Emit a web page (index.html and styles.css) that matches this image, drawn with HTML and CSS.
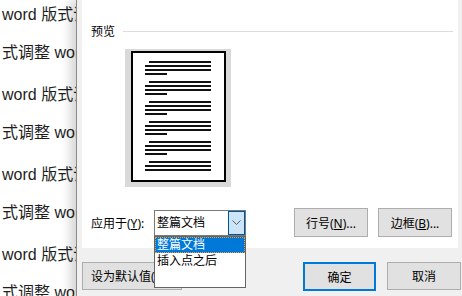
FILE: index.html
```html
<!DOCTYPE html>
<html lang="zh-CN">
<head>
  <meta charset="UTF-8">
  <title>页面设置</title>
  <link rel="stylesheet" href="styles.css">
</head>
<body>
<div class="doc">
  <p>word 版式调整 word 版式调整</p>
  <p>式调整 word 版式调整 word</p>
  <p>word 版式调整 word 版式调整</p>
  <p>式调整 word 版式调整 word</p>
  <p>word 版式调整 word 版式调整</p>
  <p>式调整 word 版式调整 word</p>
  <p>word 版式调整 word 版式调整</p>
  <p>式调整 word 版式调整 word</p>
</div>

<div class="dialog">
  <div class="panel">
    <div class="section-head"><span>预览</span><i class="rule"></i></div>
    <div class="thumb">
      <div class="page">
        <div class="group"><i class="ln ind"></i><i class="ln"></i><i class="ln"></i><i class="ln short"></i></div>
        <div class="group"><i class="ln ind"></i><i class="ln"></i><i class="ln"></i><i class="ln short"></i></div>
        <div class="group"><i class="ln ind"></i><i class="ln"></i><i class="ln"></i><i class="ln short"></i></div>
        <div class="group"><i class="ln ind"></i><i class="ln"></i><i class="ln"></i><i class="ln short"></i></div>
        <div class="group"><i class="ln ind"></i><i class="ln"></i><i class="ln"></i><i class="ln short"></i></div>
        <div class="group"><i class="ln ind"></i><i class="ln"></i><i class="ln"></i></div>
      </div>
    </div>
    <div class="apply-row">
      <label>应用于(<u>Y</u>):</label>
      <div class="combo">
        <span class="combo-text">整篇文档</span>
        <span class="combo-btn">
          <svg width="9" height="5" viewBox="0 0 9 5"><polyline points="0.5,0.5 4.5,4.5 8.5,0.5" fill="none" stroke="#5f5f5f" stroke-width="1"/></svg>
        </span>
        <ul class="combo-list">
          <li class="sel">整篇文档</li>
          <li>插入点之后</li>
        </ul>
      </div>
      <div class="row-btns">
        <button>行号(<u>N</u>)...</button>
        <button>边框(<u>B</u>)...</button>
      </div>
    </div>
  </div>
  <div class="footer">
    <button class="wide">设为默认值(<u>D</u>)</button>
    <button class="primary">确定</button>
    <button>取消</button>
  </div>
</div>
</body>
</html>
```

FILE: styles.css
```css
body {
  margin: 0;
  overflow: hidden;
  background: #fff;
  font-family: "Liberation Sans", "Noto Sans CJK SC", sans-serif;
}
.doc {
  height: 300px;
  overflow: hidden;
  margin-top: -4px;
  padding-left: 2px;
  color: #1e1e1e;
}
.doc p {
  margin: 0;
  font-size: 16px;
  line-height: 38px;
  white-space: nowrap;
}
.doc p:nth-child(even) { margin-bottom: 4px; }

.dialog {
  position: absolute;
  top: 0; left: 76px; right: 0; bottom: 0;
  background: #f0f0f0;
  border-left: 1px solid #8a8a8a;
  padding-left: 5px;
  box-shadow: -6px 0 9px rgba(0,0,0,0.16);
  font-family: "Noto Sans", "Noto Sans CJK SC", sans-serif;
  font-size: 12px;
  color: #000;
}
.panel {
  width: 376px;
  height: 248px;
  box-sizing: border-box;
  background: #fff;
  padding: 24px 5px 0 9px;
}
.section-head { display: flex; align-items: center; height: 15px; line-height: 15px; }
.rule { flex: 1; height: 1px; background: #dcdcdc; margin-left: 8px; }

.thumb {
  margin: 10px 0 0 34px;
  width: 106px;
  height: 138px;
  box-sizing: border-box;
  padding: 2px 5px 5px 6px;
  background: #d9d9d9;
}
.page {
  width: 95px;
  height: 131px;
  box-sizing: border-box;
  border: 2px solid #000;
  background: #fff;
  padding: 8px 0 0 12px;
}
.group { display: flex; flex-direction: column; gap: 2px; margin-bottom: 6px; }
.ln { display: block; width: 66px; height: 2px; background: #111; }
.ln.ind { width: 62px; margin-left: 4px; }
.ln.short { width: 22px; }

.apply-row {
  display: flex;
  align-items: center;
  height: 29px;
  margin: 21px 1px 0 0;
}
.apply-row label { width: 63px; white-space: nowrap; }
.combo {
  position: relative;
  width: 92px;
  height: 26px;
  box-sizing: border-box;
  border: 1px solid #7a7a7a;
  background: #fff;
}
.combo-text { display: block; padding-left: 2px; line-height: 24px; }
.combo-btn {
  position: absolute;
  top: 0; right: 0; bottom: 0;
  width: 17px;
  box-sizing: border-box;
  border: 1px solid #005499;
  background: #cce4f7;
  display: flex;
  align-items: center;
  justify-content: center;
}
.combo-list {
  position: absolute;
  top: 25px; left: -1px;
  z-index: 2;
  width: 92px;
  height: 52px;
  box-sizing: border-box;
  margin: 0;
  padding: 0;
  list-style: none;
  border: 1px solid #646464;
  background: #fff;
}
.combo-list li { padding-left: 2px; line-height: 16px; height: 16px; }
.combo-list li.sel {
  background: #0078d7;
  color: #fff;
  outline: 1px dotted #f29a2e;
  outline-offset: -1px;
}
.row-btns { margin-left: auto; display: flex; gap: 10px; }

button {
  font: inherit;
  color: #000;
  background: #e1e1e1;
  border: 1px solid #adadad;
  padding: 0;
  width: 74px;
  height: 29px;
  box-sizing: border-box;
}
.footer {
  display: flex;
  align-items: flex-start;
  margin-top: 14px;
  padding-right: 1px;
}
.footer button { height: 28px; }
.footer .wide { width: 100px; text-align: left; padding-left: 8px; margin-right: auto; }
.footer .primary { width: 73px; height: 29px; border: 2px solid #0078d7; margin-right: 11px; }
```
